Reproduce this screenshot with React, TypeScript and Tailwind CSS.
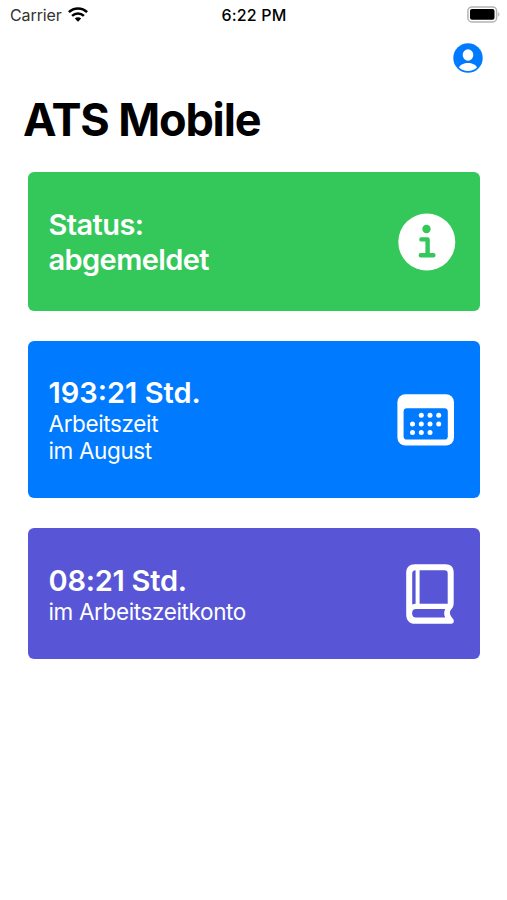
import type { ReactNode } from 'react';

function WifiIcon() {
  return (
    <svg className="-mt-[2px]" width="20" height="15" viewBox="0 0 20 15" fill="none" stroke="#000" strokeWidth="2.5">
      <path d="M0.9 5.2C6 0.1 14 0.1 19.1 5.2" />
      <path d="M4.1 8.8C7.4 5.6 12.6 5.6 15.9 8.8" />
      <path d="M10 14.8L6.8 11.6C8.7 9.9 11.3 9.9 13.2 11.6Z" fill="#000" stroke="none" />
    </svg>
  );
}

function BatteryIcon() {
  return (
    <svg className="-mt-[2px]" width="33" height="17" viewBox="0 0 33 17">
      <rect x="0.9" y="0.9" width="28.7" height="15" rx="4" fill="#fff" stroke="#b4b4b4" strokeWidth="1.5" />
      <rect x="3" y="3" width="24.5" height="10.8" rx="2" fill="#000" />
      <path d="M31.2 6.2C32.8 6.8 32.8 10 31.2 10.6Z" fill="#b4b4b4" />
    </svg>
  );
}

function ProfileIcon() {
  return (
    <svg width="30" height="30" viewBox="0 0 30 30">
      <circle cx="15" cy="15" r="14.7" fill="#007aff" />
      <ellipse cx="15" cy="12" rx="5.3" ry="5.8" fill="#fff" />
      <path d="M6 24.4C7.2 21.4 11 19.9 15 19.9S22.8 21.4 24 24.4C21.8 26.6 18.6 27.9 15 27.9S8.2 26.6 6 24.4Z" fill="#fff" />
    </svg>
  );
}

function InfoIcon() {
  return (
    <svg width="58" height="58" viewBox="0 0 58 58">
      <circle cx="28.8" cy="29" r="28.5" fill="#fff" />
      <circle cx="28.5" cy="16" r="4.2" fill="#34c759" />
      <path d="M23.4 26.4H29.6V42M22.8 42.2H35.4" fill="none" stroke="#34c759" strokeWidth="4.4" strokeLinecap="round" strokeLinejoin="round" />
    </svg>
  );
}

const calendarDots = [
  [24.3, 21.3], [33, 21.3], [41.7, 21.3],
  [15.5, 30], [24.3, 30], [33, 30], [41.7, 30],
  [15.5, 38.6], [24.3, 38.6], [33, 38.6],
];

function CalendarIcon() {
  return (
    <svg width="57" height="52" viewBox="0 0 57 52">
      <rect x="0.4" y="0.2" width="56.6" height="51.4" rx="8" fill="#fff" />
      <rect x="6.6" y="14.2" width="44.2" height="31.4" rx="3.4" fill="#007aff" />
      {calendarDots.map(([x, y]) => (
        <circle key={`${x}-${y}`} cx={x} cy={y} r="2.5" fill="#fff" />
      ))}
    </svg>
  );
}

function BookIcon() {
  return (
    <svg width="48" height="60" viewBox="0 0 48 60">
      <path
        fill="#fff"
        fillRule="evenodd"
        d="M9 0.3H39.5C44.8 0.3 47.7 3.2 47.7 8.5V38.5C47.7 41.8 46.9 43.6 45.3 45.2C43.4 47.2 43.5 50 45.2 52.4L47.4 55.4C48.6 57.3 47.4 59.7 45.2 59.7H9C3.4 59.7 0.2 56.2 0.2 50.4V9C0.2 3.4 3.3 0.3 9 0.3Z
           M9.6 6.2C7.2 6.3 6.2 7.4 6.2 9.8V40.4C7.2 39.9 8.3 39.7 9.6 39.7Z
           M13.6 6.2V39.7H41.7V9.4C41.7 7.2 40.7 6.2 38.5 6.2Z
           M10 45C7.5 45 6.1 46.6 6.1 49.2S7.5 53.6 10 53.6H39.2C37.8 50.8 37.8 47.8 39.2 45Z"
      />
    </svg>
  );
}

function Card({ className, icon, children }: { className: string; icon: ReactNode; children: ReactNode }) {
  return (
    <section className={`flex items-center justify-between rounded-md pl-[20.5px] text-white ${className}`}>
      <div>{children}</div>
      {icon}
    </section>
  );
}

const headingClass = 'text-[29px] leading-[35px] font-semibold whitespace-nowrap';
const bodyClass = 'text-[22.5px] leading-[27px] tracking-[-0.37px] whitespace-nowrap';

export default function App() {
  return (
    <main className="h-[900px] w-[507px] overflow-hidden bg-white font-['Inter',sans-serif] text-black">
      <header className="grid h-[30px] grid-cols-3 items-center pr-[7px] pl-[10px] text-[16px]">
        <div className="flex items-center gap-[6px] text-[#333]">
          <span className="tracking-[-0.1px]">Carrier</span>
          <WifiIcon />
        </div>
        <span className="justify-self-center pr-[2px] font-medium tracking-[0.2px]">6:22 PM</span>
        <div className="justify-self-end">
          <BatteryIcon />
        </div>
      </header>
      <div className="flex h-[62px] justify-end pt-[13px] pr-[24px]">
        <ProfileIcon />
      </div>
      <h1 className="pl-[23px] text-[45px] leading-[56px] font-bold tracking-[-1.15px]">ATS Mobile</h1>
      <div className="mt-[24px] flex flex-col gap-[30px] pr-[27px] pl-[28px]">
        <Card className="h-[139px] bg-[#34c759] pr-[24px]" icon={<InfoIcon />}>
          <p className={`${headingClass} tracking-[-0.6px]`}>Status:</p>
          <p className={`${headingClass} tracking-[-0.6px]`}>abgemeldet</p>
        </Card>
        <Card className="h-[157px] bg-[#007aff] pr-[26px]" icon={<CalendarIcon />}>
          <p className={headingClass}>193:21 Std.</p>
          <p className={bodyClass}>Arbeitszeit</p>
          <p className={bodyClass}>im August</p>
        </Card>
        <Card className="h-[131px] bg-[#5856d6] pr-[26px]" icon={<BookIcon />}>
          <p className={`${headingClass} tracking-[-0.25px]`}>08:21 Std.</p>
          <p className={bodyClass}>im Arbeitszeitkonto</p>
        </Card>
      </div>
    </main>
  );
}
